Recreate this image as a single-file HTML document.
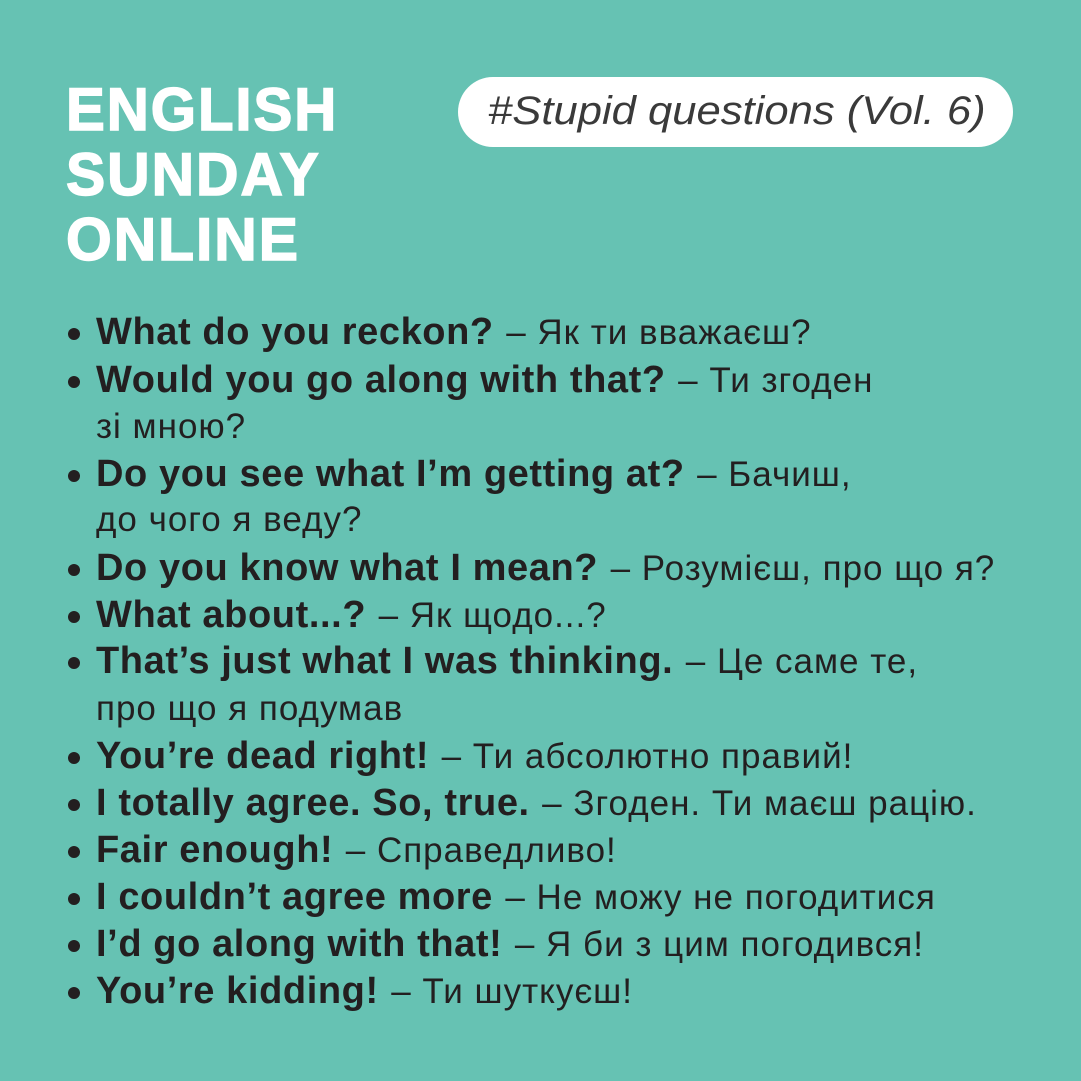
<!DOCTYPE html>
<html><head><meta charset="utf-8">
<style>
html,body{margin:0;padding:0}
body{width:1081px;height:1081px;background:#66c2b3;position:relative;overflow:hidden;font-family:"Liberation Sans",sans-serif;color:#231f20}
.title{position:absolute;left:66px;color:#fff;font-weight:bold;font-size:60px;letter-spacing:2px;line-height:60px;transform-origin:left top;-webkit-text-stroke:1.5px #fff;white-space:nowrap}
.pill{position:absolute;left:458px;top:77px;width:555px;height:70px;border-radius:35px;background:#fff}
.pill span{position:absolute;left:30px;top:12px;font-style:italic;font-size:40px;color:#3a3a3a;white-space:nowrap;transform:scaleX(1.09);transform-origin:left top}
.l{position:absolute;left:96px;white-space:nowrap;line-height:40px;height:40px}
.b{font-weight:bold;font-size:38px;letter-spacing:0.6px}
.u{font-size:35px;letter-spacing:1px;color:#231f20;margin-left:8px}
.l > .u:first-child{margin-left:0}
.d{position:absolute;left:68px;width:12px;height:12px;border-radius:50%;background:#231f20}
</style></head><body>
<div class="title" style="top:80px;transform:scaleX(0.97)">ENGLISH</div>
<div class="title" style="top:145px;transform:scaleX(0.98)">SUNDAY</div>
<div class="title" style="top:210px;transform:scaleX(0.98)">ONLINE</div>
<div class="pill"><span>#Stupid questions (Vol. 6)</span></div>

<div class="d" style="top:328px"></div><div class="l" style="top:312px"><span class="b">What do you reckon?</span> <span class="u">– Як ти вважаєш?</span></div>
<div class="d" style="top:376px"></div><div class="l" style="top:360px"><span class="b">Would you go along with that?</span> <span class="u">– Ти згоден</span></div>
<div class="l" style="top:407px"><span class="u">зі мною?</span></div>
<div class="d" style="top:470px"></div><div class="l" style="top:454px"><span class="b">Do you see what I’m getting at?</span> <span class="u">– Бачиш,</span></div>
<div class="l" style="top:500px"><span class="u">до чого я веду?</span></div>
<div class="d" style="top:564px"></div><div class="l" style="top:548px"><span class="b">Do you know what I mean?</span> <span class="u">– Розумієш, про що я?</span></div>
<div class="d" style="top:611px"></div><div class="l" style="top:595px"><span class="b">What about...?</span> <span class="u">– Як щодо...?</span></div>
<div class="d" style="top:657px"></div><div class="l" style="top:641px"><span class="b">That’s just what I was thinking.</span> <span class="u">– Це саме те,</span></div>
<div class="l" style="top:689px"><span class="u">про що я подумав</span></div>
<div class="d" style="top:752px"></div><div class="l" style="top:736px"><span class="b">You’re dead right!</span> <span class="u">– Ти абсолютно правий!</span></div>
<div class="d" style="top:799px"></div><div class="l" style="top:783px"><span class="b">I totally agree. So, true.</span> <span class="u">– Згоден. Ти маєш рацію.</span></div>
<div class="d" style="top:846px"></div><div class="l" style="top:830px"><span class="b">Fair enough!</span> <span class="u">– Справедливо!</span></div>
<div class="d" style="top:893px"></div><div class="l" style="top:877px"><span class="b">I couldn’t agree more</span> <span class="u">– Не можу не погодитися</span></div>
<div class="d" style="top:940px"></div><div class="l" style="top:924px"><span class="b">I’d go along with that!</span> <span class="u">– Я би з цим погодився!</span></div>
<div class="d" style="top:987px"></div><div class="l" style="top:971px"><span class="b">You’re kidding!</span> <span class="u">– Ти шуткуєш!</span></div>
</body></html>
